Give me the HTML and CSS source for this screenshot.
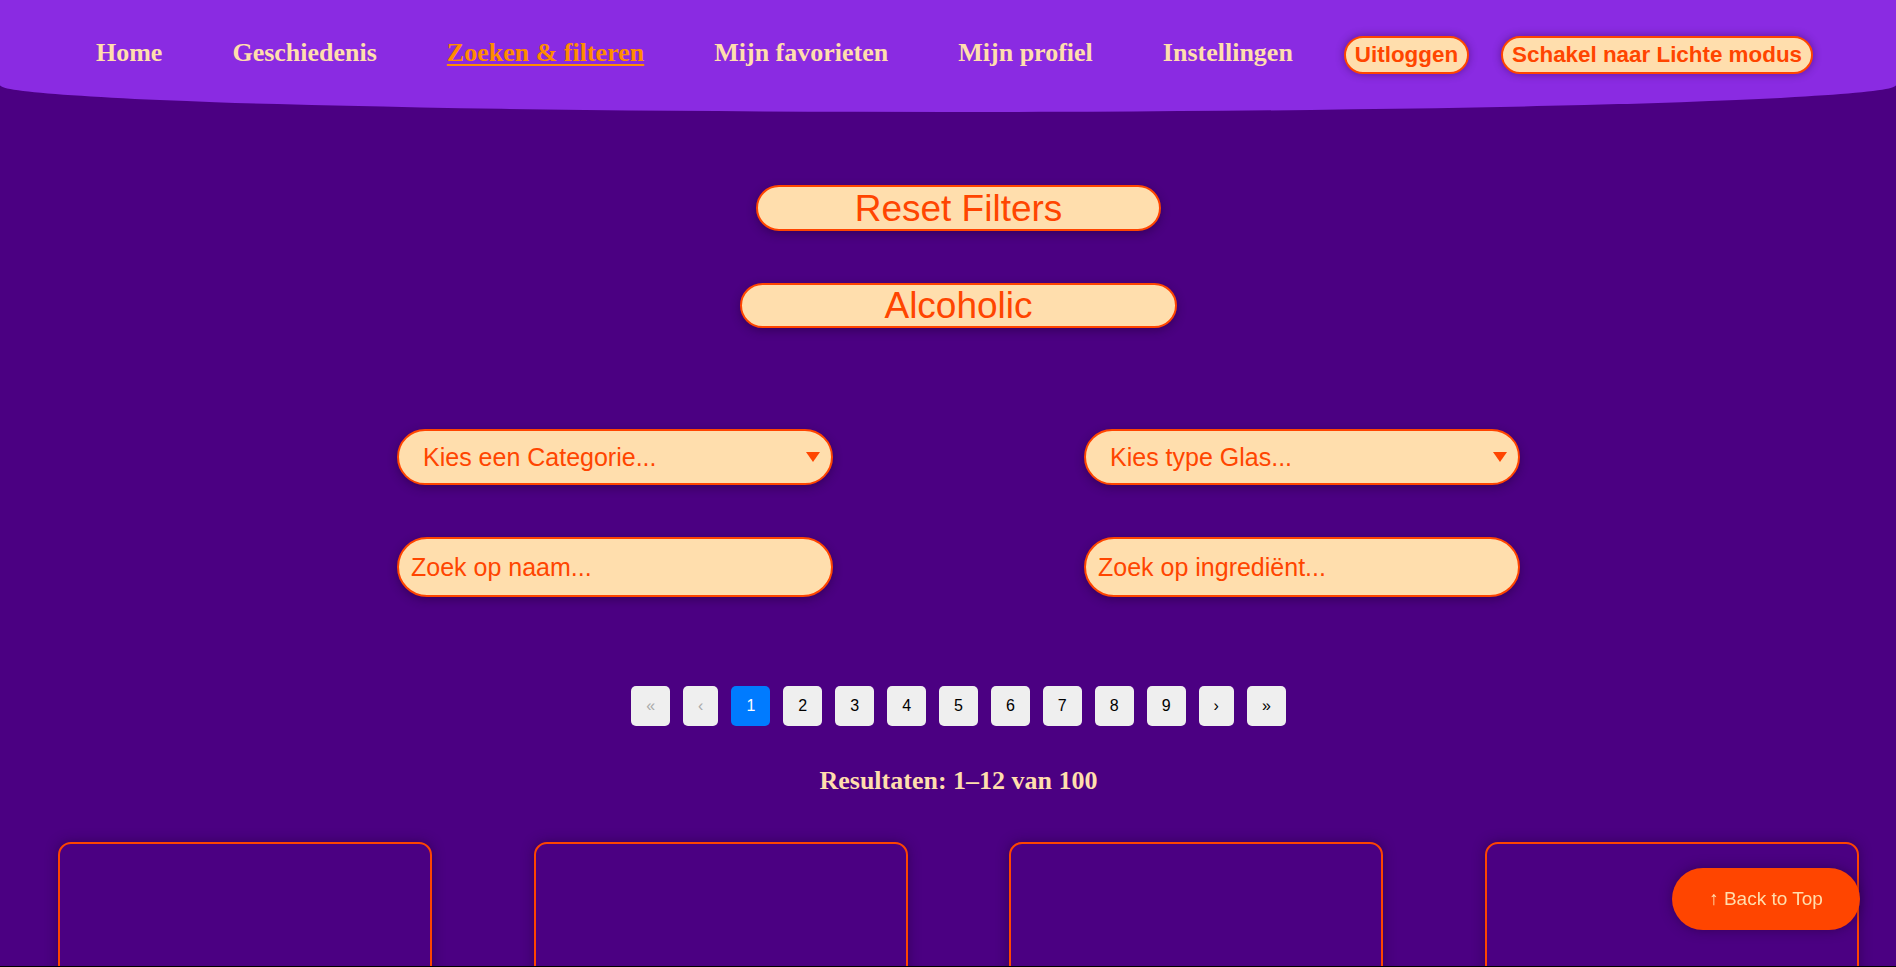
FILE: index.html
```html
<!DOCTYPE html>
<html lang="nl">
<head>
<meta charset="utf-8">
<title>Zoeken &amp; filteren</title>
<link rel="stylesheet" href="styles.css">
</head>
<body>
<header class="site-header">
  <nav class="nav">
    <a class="nav-link" href="#">Home</a>
    <a class="nav-link" href="#">Geschiedenis</a>
    <a class="nav-link active" href="#">Zoeken &amp; filteren</a>
    <a class="nav-link" href="#">Mijn favorieten</a>
    <a class="nav-link" href="#">Mijn profiel</a>
    <a class="nav-link" href="#">Instellingen</a>
    <button class="nav-btn">Uitloggen</button>
    <button class="nav-btn">Schakel naar Lichte modus</button>
  </nav>
</header>
<main class="main">
  <div class="filters-top">
    <button class="pill-btn reset-btn">Reset Filters</button>
    <button class="pill-btn alc-btn">Alcoholic</button>
  </div>
  <div class="filter-grid">
    <div class="select-wrap">
      <select class="filter-select"><option>Kies een Categorie...</option></select>
    </div>
    <div class="select-wrap">
      <select class="filter-select"><option>Kies type Glas...</option></select>
    </div>
    <input class="filter-input" type="text" placeholder="Zoek op naam...">
    <input class="filter-input" type="text" placeholder="Zoek op ingrediënt...">
  </div>
  <div class="pagination">
    <button class="page-btn disabled">«</button>
    <button class="page-btn disabled">‹</button>
    <button class="page-btn current">1</button>
    <button class="page-btn">2</button>
    <button class="page-btn">3</button>
    <button class="page-btn">4</button>
    <button class="page-btn">5</button>
    <button class="page-btn">6</button>
    <button class="page-btn">7</button>
    <button class="page-btn">8</button>
    <button class="page-btn">9</button>
    <button class="page-btn">›</button>
    <button class="page-btn">»</button>
  </div>
  <p class="results">Resultaten: 1–12 van 100</p>
  <div class="cards">
    <div class="card"></div>
    <div class="card"></div>
    <div class="card"></div>
    <div class="card"></div>
  </div>
</main>
<button class="back-top">↑ Back to Top</button>
<div class="bottom-edge"></div>
</body>
</html>
```
FILE: styles.css
```css
* { box-sizing: border-box; }
html, body { margin: 0; padding: 0; }
body {
  background: #4b0082;
  font-family: "Liberation Sans", Arial, sans-serif;
  overflow: hidden;
}

.site-header {
  background: #8a2be2;
  height: 112px;
  border-bottom-left-radius: 50% 27px;
  border-bottom-right-radius: 50% 27px;
}
.nav {
  height: 110px;
  display: flex;
  align-items: center;
  justify-content: center;
  padding-right: 6px;
}
.nav-link {
  font-family: "Liberation Serif", "Times New Roman", serif;
  font-weight: bold;
  font-size: 26px;
  color: #ffdead;
  text-decoration: none;
  padding: 0 35px;
  margin-top: -4px;
}
.nav-link.active {
  color: #ff8c00;
  text-decoration: underline;
  text-decoration-thickness: 2px;
  text-underline-offset: 3px;
}
.nav-btn {
  font-family: "Liberation Sans", Arial, sans-serif;
  font-weight: bold;
  font-size: 22.4px;
  color: #ff4500;
  background: #ffdead;
  border: 2px solid #ff4500;
  border-radius: 20px;
  padding: 4px 9px;
  margin: 0 16px;
  box-shadow: 0 0 8px rgba(40, 0, 60, 0.45);
  line-height: 26px;
}

.main {
  padding-left: 21px;
}
.filters-top {
  display: flex;
  flex-direction: column;
  align-items: center;
  padding-top: 73px;
  gap: 52px;
}
.pill-btn {
  font-family: "Liberation Sans", Arial, sans-serif;
  font-size: 37px;
  line-height: 41px;
  color: #ff4500;
  background: #ffdead;
  border: 2px solid #ff4500;
  border-radius: 24px;
  padding: 0;
  box-shadow: 0 3px 10px rgba(30, 0, 50, 0.45);
}
.reset-btn { width: 405px; height: 46px; }
.alc-btn { width: 437px; height: 45px; }

.filter-grid {
  display: grid;
  grid-template-columns: 436px 436px;
  column-gap: 251px;
  row-gap: 52px;
  justify-content: center;
  margin-top: 101px;
}
.select-wrap {
  position: relative;
}
.select-wrap::after {
  content: "";
  position: absolute;
  right: 13px;
  top: 23px;
  border-left: 7.5px solid transparent;
  border-right: 7.5px solid transparent;
  border-top: 10px solid #ff4500;
  pointer-events: none;
}
.filter-select {
  appearance: none;
  -webkit-appearance: none;
  width: 436px;
  height: 56px;
  font-family: "Liberation Sans", Arial, sans-serif;
  font-size: 25px;
  color: #ff4500;
  background: #ffdead;
  border: 2px solid #ff4500;
  border-radius: 28px;
  padding: 0 40px 0 24px;
  box-shadow: 0 3px 10px rgba(30, 0, 50, 0.45);
}
.filter-input {
  width: 436px;
  height: 60px;
  font-family: "Liberation Sans", Arial, sans-serif;
  font-size: 25px;
  color: #ff4500;
  background: #ffdead;
  border: 2px solid #ff4500;
  border-radius: 30px;
  padding: 0 12px;
  box-shadow: 0 3px 10px rgba(30, 0, 50, 0.45);
}
.filter-input::placeholder {
  color: #ff4500;
  opacity: 1;
}

.pagination {
  display: flex;
  justify-content: center;
  gap: 13px;
  margin-top: 89px;
}
.page-btn {
  font-family: "Liberation Sans", Arial, sans-serif;
  font-size: 16px;
  line-height: 20px;
  height: 40px;
  padding: 10px 15px;
  background: #efefef;
  color: #000;
  border: none;
  border-radius: 5px;
}
.page-btn.disabled { color: #aaa; }
.page-btn.current { background: #007bff; color: #fff; }

.results {
  margin: 40px 0 0;
  text-align: center;
  font-family: "Liberation Serif", "Times New Roman", serif;
  font-weight: bold;
  font-size: 26px;
  line-height: 30px;
  color: #ffdead;
}

.cards {
  display: grid;
  grid-template-columns: repeat(4, 374px);
  column-gap: 101.5px;
  justify-content: center;
  margin-top: 46px;
}
.card {
  height: 420px;
  border: 2px solid #ff4500;
  border-radius: 13px;
  box-shadow: 0 0 12px rgba(30, 0, 50, 0.5);
}

.back-top {
  position: fixed;
  right: 36px;
  bottom: 37px;
  width: 188px;
  height: 62px;
  font-family: "Liberation Sans", Arial, sans-serif;
  font-size: 19px;
  color: #ffdead;
  background: #ff4500;
  border: none;
  border-radius: 31px;
  box-shadow: 0 0 12px rgba(30, 0, 50, 0.5);
}

.bottom-edge {
  position: fixed;
  left: 0;
  right: 0;
  bottom: 0;
  height: 1px;
  background: #000;
}
```
